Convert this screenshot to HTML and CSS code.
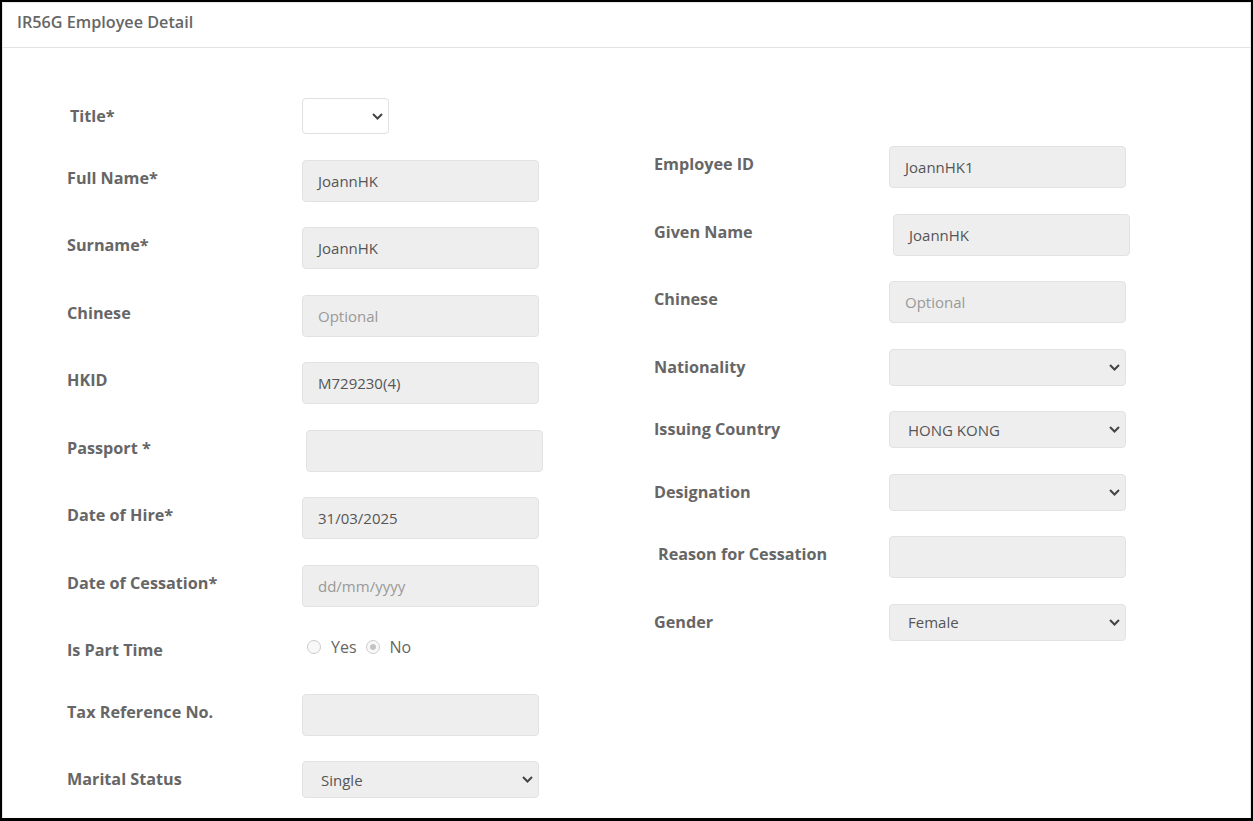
FILE: index.html
```html
<!DOCTYPE html>
<html>
<head>
<meta charset="utf-8">
<link rel="stylesheet" href="styles.css">
</head>
<body>
<div class="frame">
  <div class="card">
    <div class="card-header">IR56G Employee Detail</div>
    <div class="card-body">
      <div class="col col-left">
        <div class="row">
          <div class="label label-shift">Title*</div>
          <div class="select select-small"><span></span><svg class="chev" width="11" height="7" viewBox="0 0 11 7"><path d="M1 1l4.5 4.5L10 1" fill="none" stroke="#444" stroke-width="2"/></svg></div>
        </div>
        <div class="row">
          <div class="label">Full Name*</div>
          <div class="input">JoannHK</div>
        </div>
        <div class="row">
          <div class="label">Surname*</div>
          <div class="input">JoannHK</div>
        </div>
        <div class="row">
          <div class="label">Chinese</div>
          <div class="input placeholder">Optional</div>
        </div>
        <div class="row">
          <div class="label">HKID</div>
          <div class="input">M729230(4)</div>
        </div>
        <div class="row">
          <div class="label">Passport *</div>
          <div class="input control-shift"></div>
        </div>
        <div class="row">
          <div class="label">Date of Hire*</div>
          <div class="input">31/03/2025</div>
        </div>
        <div class="row">
          <div class="label">Date of Cessation*</div>
          <div class="input placeholder">dd/mm/yyyy</div>
        </div>
        <div class="row row-radio">
          <div class="label">Is Part Time</div>
          <div class="radios">
            <span class="radio"></span><span class="radio-text">Yes</span>
            <span class="radio checked"></span><span class="radio-text">No</span>
          </div>
        </div>
        <div class="row">
          <div class="label">Tax Reference No.</div>
          <div class="input"></div>
        </div>
        <div class="row">
          <div class="label">Marital Status</div>
          <div class="select"><span>Single</span><svg class="chev" width="11" height="7" viewBox="0 0 11 7"><path d="M1 1l4.5 4.5L10 1" fill="none" stroke="#444" stroke-width="2"/></svg></div>
        </div>
      </div>
      <div class="col col-right">
        <div class="row">
          <div class="label">Employee ID</div>
          <div class="input">JoannHK1</div>
        </div>
        <div class="row">
          <div class="label">Given Name</div>
          <div class="input control-shift">JoannHK</div>
        </div>
        <div class="row">
          <div class="label">Chinese</div>
          <div class="input placeholder">Optional</div>
        </div>
        <div class="row">
          <div class="label">Nationality</div>
          <div class="select"><span></span><svg class="chev" width="11" height="7" viewBox="0 0 11 7"><path d="M1 1l4.5 4.5L10 1" fill="none" stroke="#444" stroke-width="2"/></svg></div>
        </div>
        <div class="row">
          <div class="label">Issuing Country</div>
          <div class="select"><span>HONG KONG</span><svg class="chev" width="11" height="7" viewBox="0 0 11 7"><path d="M1 1l4.5 4.5L10 1" fill="none" stroke="#444" stroke-width="2"/></svg></div>
        </div>
        <div class="row">
          <div class="label">Designation</div>
          <div class="select"><span></span><svg class="chev" width="11" height="7" viewBox="0 0 11 7"><path d="M1 1l4.5 4.5L10 1" fill="none" stroke="#444" stroke-width="2"/></svg></div>
        </div>
        <div class="row">
          <div class="label label-shift2">Reason for Cessation</div>
          <div class="input"></div>
        </div>
        <div class="row">
          <div class="label">Gender</div>
          <div class="select"><span>Female</span><svg class="chev" width="11" height="7" viewBox="0 0 11 7"><path d="M1 1l4.5 4.5L10 1" fill="none" stroke="#444" stroke-width="2"/></svg></div>
        </div>
      </div>
    </div>
  </div>
</div>
</body>
</html>
```

FILE: styles.css
```css
* { box-sizing: border-box; }
html, body { margin: 0; padding: 0; background: #fff; }
body { font-family: "Open Sans", "Noto Sans", sans-serif; }

.frame {
  width: 1253px;
  height: 821px;
  border: 2px solid #000;
  border-bottom-width: 3px;
  overflow: hidden;
  background: #fff;
}

.card {
  height: 100%;
  border: 1px solid #e6e6e6;
  border-bottom: none;
}

.card-header {
  height: 45px;
  border-bottom: 1px solid #e3e3e3;
  padding-left: 14px;
  font-size: 16.2px;
  font-weight: 600;
  color: #666;
  line-height: 38px;
}

.card-body {
  display: grid;
  grid-template-columns: 587px 1fr;
  padding-left: 64px;
}

.col {
  display: flex;
  flex-direction: column;
  gap: 25.5px;
}
.col-left { padding-top: 50px; }
.col-right { padding-top: 98px; }

.row {
  display: flex;
  align-items: flex-start;
}

.label {
  width: 235px;
  flex: none;
  font-size: 16.2px;
  font-weight: 700;
  color: #666;
  line-height: 36px;
  white-space: nowrap;
}
.label-shift { padding-left: 3px; }
.label-shift2 { padding-left: 4px; }

.input {
  width: 237px;
  height: 42px;
  background: #eee;
  border: 1px solid #e2e2e2;
  border-radius: 4px;
  padding: 0 15px;
  font-size: 15px;
  color: #555;
  display: flex;
  align-items: center;
}
.input.placeholder { color: #999; }
.control-shift { margin-left: 4px; }

.select {
  width: 237px;
  height: 37px;
  background: #eee;
  border: 1px solid #e2e2e2;
  border-radius: 4px;
  padding: 0 5px 0 18px;
  font-size: 15px;
  color: #555;
  display: flex;
  align-items: center;
  justify-content: space-between;
}
.select-small {
  width: 87px;
  height: 36px;
  background: #fff;
  border-color: #e0e0e0;
}
.chev { flex: none; display: block; }

.row-radio { height: 36px; }
.radios {
  height: 30px;
  display: flex;
  align-items: center;
  font-size: 16px;
  color: #666;
  padding-left: 5px;
}
.radio {
  width: 14px;
  height: 14px;
  border-radius: 50%;
  border: 1px solid #ccc;
  background: #f8f8f8;
  flex: none;
  position: relative;
}
.radio.checked::after {
  content: "";
  position: absolute;
  left: 3px;
  top: 3px;
  width: 6px;
  height: 6px;
  border-radius: 50%;
  background: #c4c4c4;
}
.radio-text { margin-left: 10px; margin-right: 9px; }
```
